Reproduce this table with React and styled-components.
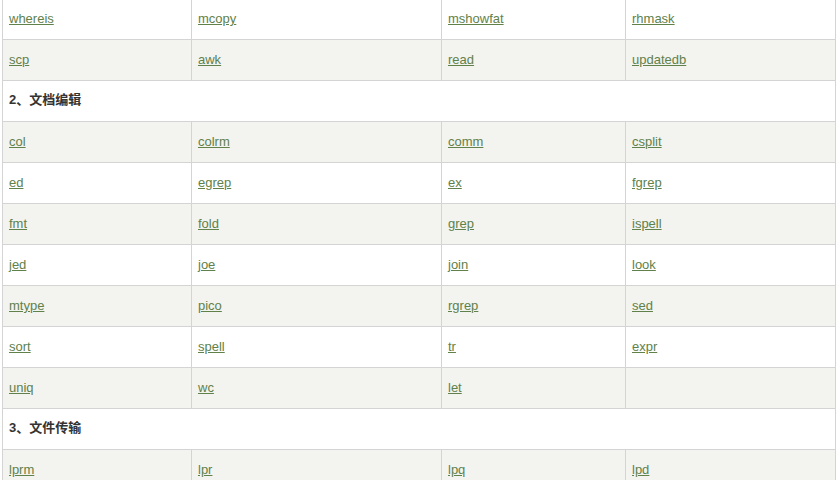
import React from 'react';
import styled, { createGlobalStyle } from 'styled-components';

const GlobalStyle = createGlobalStyle`
  html, body {
    margin: 0;
    padding: 0;
    background: #fff;
    overflow: hidden;
  }
  body {
    font-family: "Liberation Sans", Arial, "Noto Sans CJK SC", sans-serif;
    font-size: 13px;
    color: #333;
  }
`;

const Page = styled.div`
  width: 839px;
  height: 480px;
  overflow: hidden;
  padding-left: 2px;
  box-sizing: border-box;
`;

const Table = styled.table`
  width: 834px;
  margin-top: -2px;
  border-collapse: collapse;
  table-layout: fixed;
`;

const Row = styled.tr`
  background: ${(p) => (p.$alt ? '#f3f3f0' : '#fff')};
`;

const Cell = styled.td`
  height: 41px;
  padding: 0 6px;
  border: 1px solid #d4d4d4;
  vertical-align: middle;
  line-height: 20px;
  box-sizing: border-box;
`;

const Heading = styled.td`
  height: 41px;
  padding: 0 6px 2px;
  border: 1px solid #d4d4d4;
  box-sizing: border-box;
  line-height: 20px;
  font-weight: bold;
  color: #333;
  font-family: "Liberation Sans", Arial, "Noto Sans CJK SC", sans-serif;
`;

const Cmd = styled.a`
  color: #61814a;
  text-decoration: underline;
  cursor: pointer;
`;

const sections = [
  {
    rows: [
      ['whereis', 'mcopy', 'mshowfat', 'rhmask'],
      ['scp', 'awk', 'read', 'updatedb'],
    ],
    start: false,
  },
  {
    title: '2、文档编辑',
    rows: [
      ['col', 'colrm', 'comm', 'csplit'],
      ['ed', 'egrep', 'ex', 'fgrep'],
      ['fmt', 'fold', 'grep', 'ispell'],
      ['jed', 'joe', 'join', 'look'],
      ['mtype', 'pico', 'rgrep', 'sed'],
      ['sort', 'spell', 'tr', 'expr'],
      ['uniq', 'wc', 'let', ''],
    ],
    start: true,
  },
  {
    title: '3、文件传输',
    rows: [['lprm', 'lpr', 'lpq', 'lpd']],
    start: true,
  },
];

export default function App() {
  return (
    <Page>
      <GlobalStyle />
      <Table>
        <colgroup>
          <col style={{ width: 189 }} />
          <col style={{ width: 250 }} />
          <col style={{ width: 184 }} />
          <col />
        </colgroup>
        <tbody>
          {sections.map((s, si) => (
            <React.Fragment key={si}>
              {s.title && (
                <Row>
                  <Heading colSpan={4}>{s.title}</Heading>
                </Row>
              )}
              {s.rows.map((r, ri) => (
                <Row key={ri} $alt={s.start ? ri % 2 === 0 : ri % 2 === 1}>
                  {r.map((c, ci) => (
                    <Cell key={ci}>{c && <Cmd>{c}</Cmd>}</Cell>
                  ))}
                </Row>
              ))}
            </React.Fragment>
          ))}
        </tbody>
      </Table>
    </Page>
  );
}
